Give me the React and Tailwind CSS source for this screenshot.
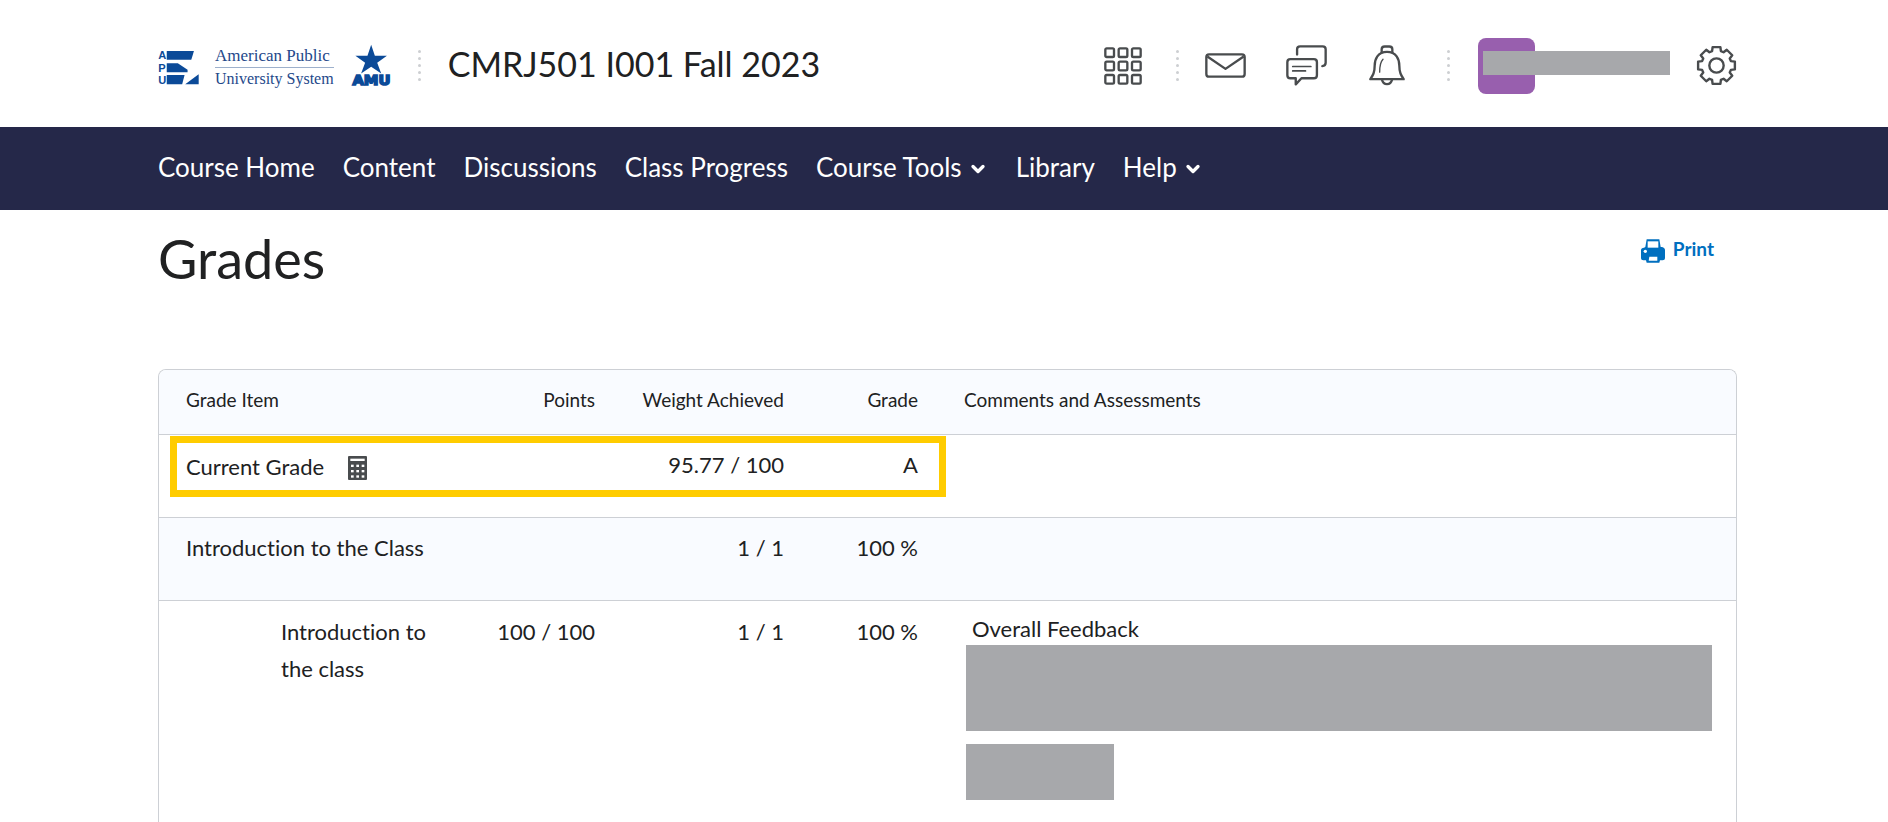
import React from 'react';
import { FiChevronDown } from 'react-icons/fi';

const navItems = [
    { label: 'Course Home' },
    { label: 'Content' },
    { label: 'Discussions' },
    { label: 'Class Progress' },
    { label: 'Course Tools', menu: true },
    { label: 'Library' },
    { label: 'Help', menu: true }
];

// Outline of an eight-toothed gear centred on 0,0
const gearPath = () => {
    const points = [];
    for (let i = 0; i < 8; i++) {
        [[44, -17], [55, -12], [55, 12], [44, 17]].forEach(([r, offset]) => {
            const a = ((i * 45 + offset) * Math.PI) / 180;
            points.push(`${(r * Math.cos(a)).toFixed(1)},${(r * Math.sin(a)).toFixed(1)}`);
        });
    }
    return `M${points.join('L')}Z`;
};

const ApuMark = () => (
    <svg viewBox="53 50 122 122" className="size-[41px] shrink-0" fill="#0b4a98">
        <g fontFamily="'Liberation Sans Narrow', 'Liberation Sans', sans-serif" fontWeight="700" fontSize="33">
            <text x="54" y="87">A</text>
            <text x="54" y="124">P</text>
            <text x="54" y="161">U</text>
        </g>
        <path d="M79 62H160L152 88H79Z" />
        <path d="M79 98H112L141 118V125H79Z" />
        <path d="M79 133H132L125 161H79Z" />
        <path d="M134 161L174 131V161Z" />
    </svg>
);

const AmuMark = () => (
    <svg viewBox="631 30 128 146" className="h-[49px] w-[43px] shrink-0" fill="#0b4a98">
        <path d="M694 41L705 74H741L712 95L724 127L694 107L664 127L676 95L647 74H683Z" />
        <text
            x="695"
            y="161"
            textAnchor="middle"
            fontFamily="'DejaVu Sans', sans-serif"
            fontWeight="700"
            fontSize="44"
            stroke="#0b4a98"
            strokeWidth="5"
        >
            AMU
        </text>
    </svg>
);

const GridIcon = () => (
    <svg viewBox="0 0 114 114" className="size-[38px]" fill="none" stroke="#494c4e" strokeWidth="7">
        {[4, 44, 84].map((y) =>
            [4, 44, 84].map((x) => <rect key={`${x}-${y}`} x={x} y={y} width="26" height="26" rx="4" />)
        )}
    </svg>
);

const MailIcon = () => (
    <svg viewBox="0 0 122 74" className="h-[25px] w-[41px]" fill="none" stroke="#494c4e" strokeWidth="7" strokeLinejoin="round">
        <rect x="4" y="4" width="114" height="66" rx="8" />
        <path d="M7 10L61 47L115 10" />
    </svg>
);

const ChatIcon = () => (
    <svg viewBox="0 0 122 122" className="size-[41px]" fill="none" stroke="#494c4e" strokeWidth="7" strokeLinecap="round" strokeLinejoin="round">
        <path d="M33 28V13Q33 4 42 4H109Q118 4 118 13V53Q118 62 108 63" />
        <path d="M13 42H83Q92 42 92 51V90Q92 99 83 99H46L29 117V99H13Q4 99 4 90V51Q4 42 13 42Z" />
        <path d="M20 64H74M20 77H58" strokeWidth="5" />
    </svg>
);

const BellIcon = () => (
    <svg viewBox="0 0 108 122" className="h-[41px] w-[36px]" fill="none" stroke="#494c4e" strokeWidth="7" strokeLinejoin="round" strokeLinecap="round">
        <path d="M38 22V12Q38 4 47 4H61Q70 4 70 12V22" />
        <path d="M54 20C26 20 17 42 17 62C17 82 12 90 4 102H104C96 90 91 82 91 62C91 42 82 20 54 20Z" />
        <path d="M39 104Q42 117 54 117T69 104" />
        <path d="M42 42Q32 52 32 81" strokeWidth="4" />
    </svg>
);

const GearIcon = () => (
    <svg viewBox="-60 -60 120 120" className="size-[41px]" fill="none" stroke="#494c4e" strokeWidth="7" strokeLinejoin="round">
        <path d={gearPath()} />
        <circle r="21" />
    </svg>
);

const PrintIcon = () => (
    <svg viewBox="0 0 72 72" className="size-6" fill="#006fbf">
        <path d="M17 1H55L59 24H63Q72 26 72 34V58Q72 64 65 64H57L55 71H17L15 64H7Q0 64 0 58V34Q0 26 9 26L13 24Z" />
        <path d="M20 7H52V26H20Z" fill="#fff" />
        <path d="M25 53H49V65H23Z" fill="#fff" />
        <circle cx="13" cy="37" r="5" fill="#fff" />
    </svg>
);

const CalculatorIcon = () => (
    <svg viewBox="0 0 57 72" className="h-6 w-[19px]" fill="#494c4e">
        <rect width="57" height="72" rx="3" />
        <rect x="7" y="8" width="43" height="7" fill="#fff" />
        {[26, 42, 58].map((y) =>
            [9, 25, 41].map((x) => <rect key={`${x}-${y}`} x={x} y={y} width="8" height="7" fill="#fff" />)
        )}
    </svg>
);

const Dots = () => (
    <div className="flex w-1 shrink-0 flex-col gap-1" aria-hidden="true">
        {[0, 1, 2, 3, 4].map((i) => (
            <span key={i} className="h-[3px] w-[3px] rounded-full bg-[#cdcfd2]" />
        ))}
    </div>
);

const Header = () => (
    <header className="flex h-[127px] items-center pt-1 pr-[151px] pl-[158px]">
        <a href="#" aria-label="American Public University System" className="flex items-center pt-1">
            <ApuMark />
            <span className="ml-4 flex flex-col font-['Liberation_Serif',serif] whitespace-nowrap text-[#24488a]">
                <span className="border-b border-[#9db0cc] text-[17px] leading-[22px]">American Public</span>
                <span className="text-[16px] leading-[22px]">University System</span>
            </span>
            <span className="ml-4 pb-1">
                <AmuMark />
            </span>
        </a>
        <div className="ml-[25px]">
            <Dots />
        </div>
        <a href="#" className="ml-[26px] pb-1 text-[34px] leading-10 whitespace-nowrap">
            CMRJ501 I001 Fall 2023
        </a>
        <div className="ml-auto flex items-center">
            <button type="button" aria-label="Select a course"><GridIcon /></button>
            <div className="mr-[25px] ml-[34px]"><Dots /></div>
            <button type="button" aria-label="Messages"><MailIcon /></button>
            <button type="button" aria-label="Subscriptions" className="ml-10"><ChatIcon /></button>
            <button type="button" aria-label="Notifications" className="ml-[42px]"><BellIcon /></button>
            <div className="mr-[27px] ml-[42px]"><Dots /></div>
            <button type="button" aria-label="Profile" className="relative h-14 w-[192px]">
                <span className="block h-14 w-[57px] rounded-lg bg-[#985fae]" />
                <span className="absolute top-[13px] left-[5px] h-6 w-[187px] bg-[#a7a8ab]" />
            </button>
            <button type="button" aria-label="Settings" className="ml-[26px]"><GearIcon /></button>
        </div>
    </header>
);

const Navbar = () => (
    <nav className="flex h-[83px] items-center gap-7 bg-[#252849] pr-[151px] pb-1 pl-[158px] text-[26px] leading-8 text-white">
        {navItems.map((item) =>
            item.menu ? (
                <button key={item.label} type="button" className="flex items-center gap-1.5 whitespace-nowrap">
                    {item.label}
                    <FiChevronDown className="mt-1 size-5" strokeWidth={4} />
                </button>
            ) : (
                <a key={item.label} href="#" className="whitespace-nowrap">{item.label}</a>
            )
        )}
    </nav>
);

const GradesTable = () => (
    <div className="mt-20 overflow-hidden rounded-t-lg border border-b-0 border-[#cdd0d5]">
        <table className="w-full table-fixed border-separate border-spacing-0 text-left text-[22px] leading-[37px] [&_td]:pr-6 [&_td]:align-top">
            <colgroup>
                <col className="w-[295px]" />
                <col className="w-[165px]" />
                <col className="w-[189px]" />
                <col className="w-[134px]" />
                <col />
            </colgroup>
            <thead className="bg-[#f9fbff] text-[19px] [&_th]:h-[65px] [&_th]:border-b [&_th]:border-[#cdd0d5] [&_th]:pr-6 [&_th]:pb-1.5 [&_th]:font-normal">
                <tr>
                    <th scope="col" className="pl-[27px]">Grade Item</th>
                    <th scope="col" className="text-right">Points</th>
                    <th scope="col" className="text-right">Weight Achieved</th>
                    <th scope="col" className="text-right">Grade</th>
                    <th scope="col" className="pl-[22px]">Comments and Assessments</th>
                </tr>
            </thead>
            <tbody>
                <tr className="relative h-[83px] [&_td]:border-b [&_td]:border-[#cdd0d5] [&_td]:pt-[11px]">
                    <td className="pl-[27px]">
                        <div className="flex items-center gap-6 pt-0.5">
                            Current Grade
                            <button type="button" aria-label="Grade calculation" className="pt-0.5"><CalculatorIcon /></button>
                        </div>
                        <div className="pointer-events-none absolute top-px left-[11px] h-[61px] w-[776px] border-[7px] border-[#ffcc00]" />
                    </td>
                    <td />
                    <td className="text-right">95.77 / 100</td>
                    <td className="text-right">A</td>
                    <td />
                </tr>
                <tr className="h-[83px] bg-[#f9fbff] [&_td]:border-b [&_td]:border-[#cdd0d5] [&_td]:pt-[11px]">
                    <td className="pl-[27px]">Introduction to the Class</td>
                    <td />
                    <td className="text-right">1 / 1</td>
                    <td className="text-right">100 %</td>
                    <td />
                </tr>
                <tr className="[&_td]:pt-3">
                    <td className="pl-[122px]">Introduction to the class</td>
                    <td className="text-right">100 / 100</td>
                    <td className="text-right">1 / 1</td>
                    <td className="text-right">100 %</td>
                    <td className="pb-[22px] pl-6">
                        <p className="pl-1.5 leading-8">Overall Feedback</p>
                        <div className="h-[86px] bg-[#a7a8ab]" />
                        <div className="mt-[13px] h-14 w-[148px] bg-[#a7a8ab]" />
                    </td>
                </tr>
            </tbody>
        </table>
    </div>
);

const App = () => {
    return (
        <div className="min-h-screen bg-white font-['Lato',sans-serif] text-[#202122] [font-variant-ligatures:none]">
            <Header />
            <Navbar />
            <main className="pt-[18px] pr-[151px] pl-[158px]">
                <div className="flex items-start justify-between">
                    <h1 className="text-[54px] leading-[61px]">Grades</h1>
                    <button type="button" className="mt-[9px] mr-[23px] flex items-start gap-2 text-[19px] leading-6 font-bold text-[#006fbf]">
                        <span className="pt-0.5"><PrintIcon /></span>
                        Print
                    </button>
                </div>
                <GradesTable />
            </main>
        </div>
    );
};

export default App;
